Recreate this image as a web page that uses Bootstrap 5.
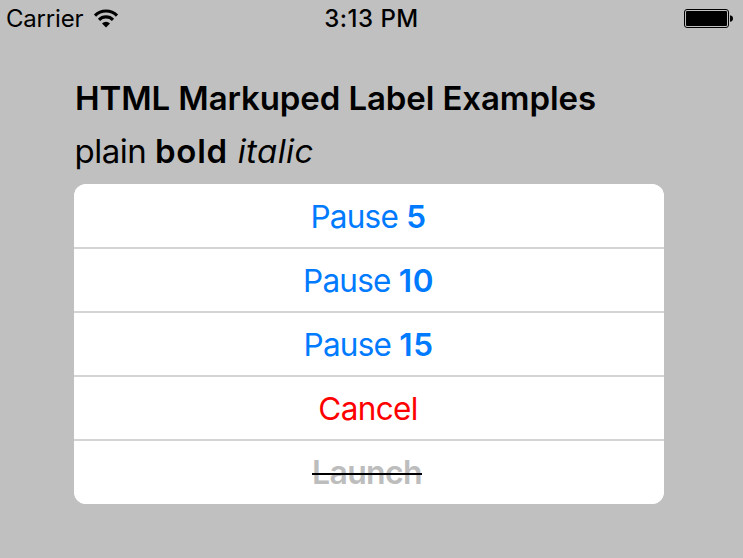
<!DOCTYPE html>
<html lang="en">
<head>
<meta charset="utf-8">
<meta name="viewport" content="width=device-width, initial-scale=1">
<title>HTML Markuped Label Examples</title>
<link href="https://cdn.jsdelivr.net/npm/bootstrap@5.3.0/dist/css/bootstrap.min.css" rel="stylesheet">
<style>
body { background: #c0c0c0; color: #000; font-family: Inter, "Liberation Sans", sans-serif; height: 558px; }
b { font-weight: 600; }
.status { height: 38px; font-size: 24px; line-height: 38px; padding: 0 9px 0 6px; }
.carrier { letter-spacing: -.2px; }
.clock { font-weight: 500; letter-spacing: .5px; padding-left: 3px; }
.screen { padding: 41px 79px 0 74px; }
.heading { font-size: 33px; line-height: 38px; font-weight: 600; letter-spacing: -.1px; margin: 0 0 12px; padding-left: 1px; }
.sample { font-size: 33px; line-height: 44px; height: 55px; font-weight: 400; letter-spacing: -.5px; margin: 0; padding-left: .5px; }
.sample b { letter-spacing: .75px; }
.sample i { letter-spacing: .4px; padding-left: 1px; }
.actions { --bs-list-group-border-radius: 12px; border-radius: 12px; overflow: hidden; background: #fff; }
.action { height: 64px; padding: 1px 1px 0 0; border: 0; background: #fff; color: #007aff; font-size: 31.5px; line-height: 61px; letter-spacing: -.75px; }
.action + .action { border-top: 2px solid #d4d4d4; padding-top: 2px; line-height: 60px; }
.action:first-child { height: 63px; padding-top: 0; line-height: 65px; }
.action:last-child { height: 65px; }
.action b { letter-spacing: .5px; }
.action.cancel { color: #f00; padding-right: 2px; letter-spacing: -.65px; }
.action + .action.launch { color: #bdbdbd; font-size: 32px; font-weight: 600; letter-spacing: -.65px; padding: 0 4px 0 0; line-height: 62px; }
.struck { text-decoration: line-through #000 2px; text-decoration-skip-ink: none; }
</style>
<script src="https://cdn.jsdelivr.net/npm/bootstrap@5.3.0/dist/js/bootstrap.bundle.min.js"></script>
</head>
<body class="overflow-hidden">
<header class="status row g-0 align-items-center">
  <div class="col d-flex align-items-center">
    <span class="carrier">Carrier</span>
    <svg class="ms-2" width="28" height="22" viewBox="0 0 28 22" fill="none" stroke="#000" stroke-width="3.1" aria-hidden="true">
      <path d="M4 7.6a15.5 15.5 0 0 1 22 0"/>
      <path d="M8 11.8a9.8 9.8 0 0 1 14 0"/>
      <path d="M15 19.6l-4-4.2a5.8 5.8 0 0 1 8 0z" fill="#000" stroke="none"/>
    </svg>
  </div>
  <div class="col-auto clock">3:13 PM</div>
  <div class="col d-flex justify-content-end">
    <svg width="50" height="20" viewBox="0 0 50 20" aria-hidden="true">
      <rect x=".5" y=".5" width="44" height="18" rx="2.5" fill="none" stroke="#000"/>
      <rect x="2" y="2" width="41" height="15" rx="1" fill="#000"/>
      <path d="M46 6.2q3 .5 3 3.3t-3 3.3z" fill="#000"/>
    </svg>
  </div>
</header>
<main class="screen">
  <h1 class="heading text-nowrap">HTML Markuped Label Examples</h1>
  <p class="sample">plain <b>bold</b> <i>italic</i></p>
  <div class="list-group actions">
    <button type="button" class="list-group-item text-center action">Pause <b>5</b></button>
    <button type="button" class="list-group-item text-center action">Pause <b>10</b></button>
    <button type="button" class="list-group-item text-center action">Pause <b>15</b></button>
    <button type="button" class="list-group-item text-center action cancel">Cancel</button>
    <button type="button" class="list-group-item text-center action launch"><span class="struck">Launch</span></button>
  </div>
</main>
</body>
</html>
